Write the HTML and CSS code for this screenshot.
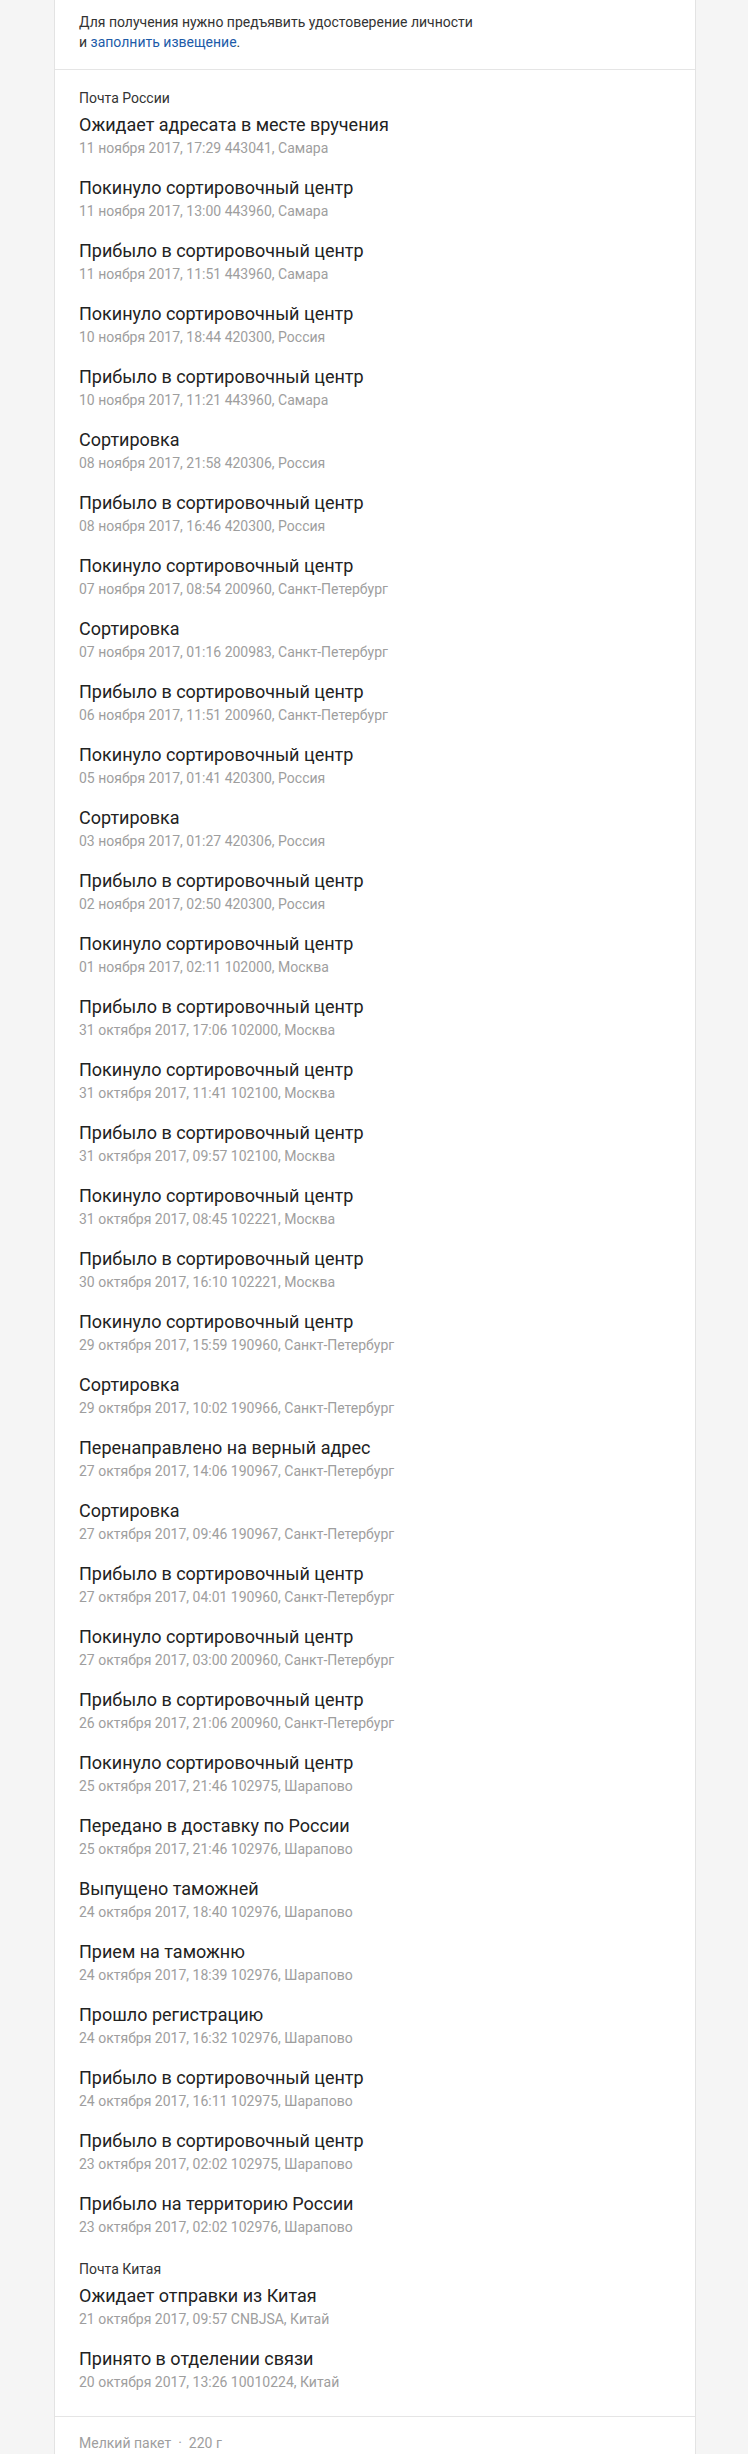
FILE: index.html
```html
<!DOCTYPE html>
<html lang="ru">
<head>
<meta charset="utf-8">
<title>Отслеживание</title>
<link rel="stylesheet" href="styles.css">
</head>
<body>
<div class="card">
  <div class="notice">
    Для получения нужно предъявить удостоверение личности<br>
    и <a class="link" href="#">заполнить извещение</a>.
  </div>
  <div class="events">
    <section class="carrier">
      <div class="carrier-name">Почта России</div>
      <ul class="list">
        <li class="event"><div class="title">Ожидает адресата в месте вручения</div><div class="meta">11 ноября 2017, 17:29 443041, Самара</div></li>
        <li class="event"><div class="title">Покинуло сортировочный центр</div><div class="meta">11 ноября 2017, 13:00 443960, Самара</div></li>
        <li class="event"><div class="title">Прибыло в сортировочный центр</div><div class="meta">11 ноября 2017, 11:51 443960, Самара</div></li>
        <li class="event"><div class="title">Покинуло сортировочный центр</div><div class="meta">10 ноября 2017, 18:44 420300, Россия</div></li>
        <li class="event"><div class="title">Прибыло в сортировочный центр</div><div class="meta">10 ноября 2017, 11:21 443960, Самара</div></li>
        <li class="event"><div class="title">Сортировка</div><div class="meta">08 ноября 2017, 21:58 420306, Россия</div></li>
        <li class="event"><div class="title">Прибыло в сортировочный центр</div><div class="meta">08 ноября 2017, 16:46 420300, Россия</div></li>
        <li class="event"><div class="title">Покинуло сортировочный центр</div><div class="meta">07 ноября 2017, 08:54 200960, Санкт-Петербург</div></li>
        <li class="event"><div class="title">Сортировка</div><div class="meta">07 ноября 2017, 01:16 200983, Санкт-Петербург</div></li>
        <li class="event"><div class="title">Прибыло в сортировочный центр</div><div class="meta">06 ноября 2017, 11:51 200960, Санкт-Петербург</div></li>
        <li class="event"><div class="title">Покинуло сортировочный центр</div><div class="meta">05 ноября 2017, 01:41 420300, Россия</div></li>
        <li class="event"><div class="title">Сортировка</div><div class="meta">03 ноября 2017, 01:27 420306, Россия</div></li>
        <li class="event"><div class="title">Прибыло в сортировочный центр</div><div class="meta">02 ноября 2017, 02:50 420300, Россия</div></li>
        <li class="event"><div class="title">Покинуло сортировочный центр</div><div class="meta">01 ноября 2017, 02:11 102000, Москва</div></li>
        <li class="event"><div class="title">Прибыло в сортировочный центр</div><div class="meta">31 октября 2017, 17:06 102000, Москва</div></li>
        <li class="event"><div class="title">Покинуло сортировочный центр</div><div class="meta">31 октября 2017, 11:41 102100, Москва</div></li>
        <li class="event"><div class="title">Прибыло в сортировочный центр</div><div class="meta">31 октября 2017, 09:57 102100, Москва</div></li>
        <li class="event"><div class="title">Покинуло сортировочный центр</div><div class="meta">31 октября 2017, 08:45 102221, Москва</div></li>
        <li class="event"><div class="title">Прибыло в сортировочный центр</div><div class="meta">30 октября 2017, 16:10 102221, Москва</div></li>
        <li class="event"><div class="title">Покинуло сортировочный центр</div><div class="meta">29 октября 2017, 15:59 190960, Санкт-Петербург</div></li>
        <li class="event"><div class="title">Сортировка</div><div class="meta">29 октября 2017, 10:02 190966, Санкт-Петербург</div></li>
        <li class="event"><div class="title">Перенаправлено на верный адрес</div><div class="meta">27 октября 2017, 14:06 190967, Санкт-Петербург</div></li>
        <li class="event"><div class="title">Сортировка</div><div class="meta">27 октября 2017, 09:46 190967, Санкт-Петербург</div></li>
        <li class="event"><div class="title">Прибыло в сортировочный центр</div><div class="meta">27 октября 2017, 04:01 190960, Санкт-Петербург</div></li>
        <li class="event"><div class="title">Покинуло сортировочный центр</div><div class="meta">27 октября 2017, 03:00 200960, Санкт-Петербург</div></li>
        <li class="event"><div class="title">Прибыло в сортировочный центр</div><div class="meta">26 октября 2017, 21:06 200960, Санкт-Петербург</div></li>
        <li class="event"><div class="title">Покинуло сортировочный центр</div><div class="meta">25 октября 2017, 21:46 102975, Шарапово</div></li>
        <li class="event"><div class="title">Передано в доставку по России</div><div class="meta">25 октября 2017, 21:46 102976, Шарапово</div></li>
        <li class="event"><div class="title">Выпущено таможней</div><div class="meta">24 октября 2017, 18:40 102976, Шарапово</div></li>
        <li class="event"><div class="title">Прием на таможню</div><div class="meta">24 октября 2017, 18:39 102976, Шарапово</div></li>
        <li class="event"><div class="title">Прошло регистрацию</div><div class="meta">24 октября 2017, 16:32 102976, Шарапово</div></li>
        <li class="event"><div class="title">Прибыло в сортировочный центр</div><div class="meta">24 октября 2017, 16:11 102975, Шарапово</div></li>
        <li class="event"><div class="title">Прибыло в сортировочный центр</div><div class="meta">23 октября 2017, 02:02 102975, Шарапово</div></li>
        <li class="event"><div class="title">Прибыло на территорию России</div><div class="meta">23 октября 2017, 02:02 102976, Шарапово</div></li>
      </ul>
    </section>
    <section class="carrier">
      <div class="carrier-name">Почта Китая</div>
      <ul class="list">
        <li class="event"><div class="title">Ожидает отправки из Китая</div><div class="meta">21 октября 2017, 09:57 CNBJSA, Китай</div></li>
        <li class="event"><div class="title">Принято в отделении связи</div><div class="meta">20 октября 2017, 13:26 10010224, Китай</div></li>
      </ul>
    </section>
  </div>
  <div class="footer">
    <span>Мелкий пакет</span><span class="dot">·</span><span>220 г</span>
  </div>
</div>
</body>
</html>
```

FILE: styles.css
```css
html, body {
  margin: 0;
  padding: 0;
}
body {
  background: #f5f5f5;
  font-family: Roboto, "Noto Sans", "Liberation Sans", sans-serif;
  padding: 0 52px 0 54px;
}
.card {
  background: #fff;
  border-left: 1px solid #e3e3e3;
  border-right: 1px solid #e3e3e3;
}
.notice {
  padding: 12px 24px 17px;
  font-size: 14px;
  line-height: 20px;
  color: #333;
  border-bottom: 1px solid #e5e5e5;
}
.link {
  color: #1d5ba8;
  text-decoration: none;
}
.events {
  padding: 18px 24px 23px;
  border-bottom: 1px solid #e5e5e5;
}
.carrier + .carrier {
  margin-top: 21px;
}
.carrier-name {
  font-size: 14px;
  line-height: 20px;
  color: #333;
  margin-bottom: 5px;
}
.list {
  list-style: none;
  margin: 0;
  padding: 0;
  display: flex;
  flex-direction: column;
  gap: 17px;
}
.title {
  font-size: 18px;
  line-height: 24px;
  color: #222;
}
.meta {
  font-size: 14px;
  line-height: 22px;
  color: #9e9e9e;
}
.footer {
  padding: 16px 24px 16px;
  font-size: 14px;
  line-height: 20px;
  color: #9e9e9e;
}
.dot {
  margin: 0 7px;
}
```
